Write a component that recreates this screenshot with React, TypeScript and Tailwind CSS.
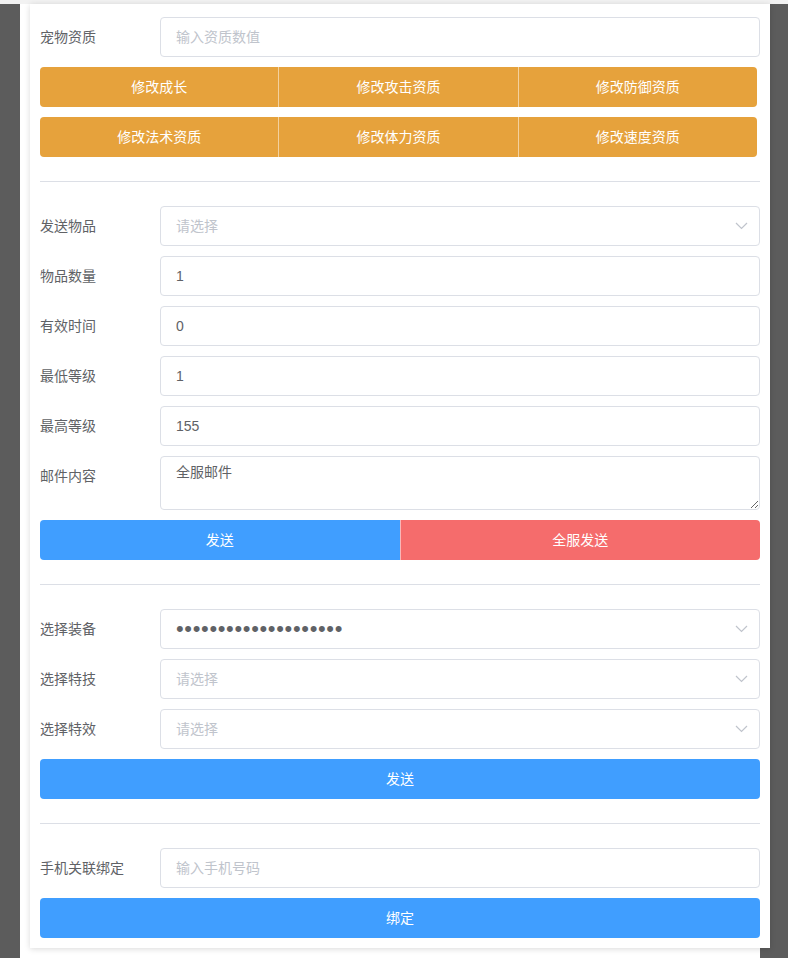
import React from 'react';

const font = "font-['Liberation_Sans','Noto_Sans_CJK_SC',sans-serif]";

type FieldProps = {
  label: string;
  children: React.ReactNode;
};

function Field({ label, children }: FieldProps) {
  return (
    <div className="flex items-start mb-[10px]">
      <label className="w-[120px] shrink-0 leading-[40px] text-[14px] text-[#606266]">{label}</label>
      <div className="flex-1 min-w-0">{children}</div>
    </div>
  );
}

function TextInput({ value, placeholder }: { value?: string; placeholder?: string }) {
  return (
    <input
      readOnly
      defaultValue={value}
      placeholder={placeholder}
      className={`${font} block w-full h-[40px] px-[15px] border border-[#dcdfe6] rounded-[4px] bg-white text-[14px] text-[#606266] placeholder:text-[#c0c4cc] outline-none`}
    />
  );
}

function Chevron() {
  return (
    <svg className="absolute right-[12px] top-1/2 -translate-y-1/2" width="13" height="8" viewBox="0 0 13 8" fill="none">
      <polyline points="1,1 6.5,6.5 12,1" stroke="#c0c4cc" strokeWidth="1.2" />
    </svg>
  );
}

function Select({ placeholder, password }: { placeholder?: string; password?: boolean }) {
  return (
    <div className="relative">
      {password ? (
        <input
          readOnly
          type="password"
          defaultValue="xxxxxxxxxxxxxxxxxxxx"
          className={`${font} block w-full h-[40px] pl-[15px] pr-[30px] border border-[#dcdfe6] rounded-[4px] bg-white text-[22px] tracking-[0.65px] text-[#606266] outline-none`}
        />
      ) : (
        <TextInput placeholder={placeholder} />
      )}
      <Chevron />
    </div>
  );
}

function Divider() {
  return <div className="my-[24px] h-px bg-[#dcdfe6]" />;
}

const orangeRows = [
  ['修改成长', '修改攻击资质', '修改防御资质'],
  ['修改法术资质', '修改体力资质', '修改速度资质'],
];

export default function App() {
  return (
    <div className={`${font} w-[788px] h-[958px] bg-white flex flex-col overflow-hidden`}>
      <div className="h-[4px] shrink-0 bg-[#f2f2f2]" />
      <div className="flex flex-1">
        <div className="w-[20px] bg-[#5c5c5c]" />
        <div className="w-[10px]" />
        <div className="w-[740px] flex flex-col">
          <div className="relative z-10 h-[944px] bg-white px-[10px] pt-[13px] shadow-[0_1px_6px_rgba(0,0,0,0.15)]">
            <Field label="宠物资质">
              <TextInput placeholder="输入资质数值" />
            </Field>
            {orangeRows.map((row, i) => (
              <div key={i} className="flex w-[717px] h-[40px] mb-[10px]">
                {row.map((t, j) => (
                  <button
                    key={t}
                    className={`flex-1 bg-[#e6a23c] text-white text-[14px] ${j === 0 ? 'rounded-l-[4px]' : 'border-l border-white/50'} ${j === row.length - 1 ? 'rounded-r-[4px]' : ''}`}
                  >
                    {t}
                  </button>
                ))}
              </div>
            ))}

            <Divider />

            <Field label="发送物品">
              <Select placeholder="请选择" />
            </Field>
            <Field label="物品数量">
              <TextInput value="1" />
            </Field>
            <Field label="有效时间">
              <TextInput value="0" />
            </Field>
            <Field label="最低等级">
              <TextInput value="1" />
            </Field>
            <Field label="最高等级">
              <TextInput value="155" />
            </Field>
            <Field label="邮件内容">
              <textarea
                readOnly
                defaultValue="全服邮件"
                rows={2}
                className={`${font} block w-full h-[54px] px-[15px] py-[5px] leading-[1.5] border border-[#dcdfe6] rounded-[4px] text-[14px] text-[#606266] outline-none`}
              />
            </Field>
            <div className="flex h-[40px] mb-[10px]">
              <button className="flex-1 rounded-l-[4px] bg-[#409eff] text-white text-[14px]">发送</button>
              <button className="flex-1 rounded-r-[4px] border-l border-white/50 bg-[#f56c6c] text-white text-[14px]">全服发送</button>
            </div>

            <Divider />

            <Field label="选择装备">
              <Select password />
            </Field>
            <Field label="选择特技">
              <Select placeholder="请选择" />
            </Field>
            <Field label="选择特效">
              <Select placeholder="请选择" />
            </Field>
            <button className="block w-full h-[40px] mb-[10px] rounded-[4px] bg-[#409eff] text-white text-[14px]">发送</button>

            <Divider />

            <Field label="手机关联绑定">
              <TextInput placeholder="输入手机号码" />
            </Field>
            <button className="block w-full h-[40px] mb-[10px] rounded-[4px] bg-[#409eff] text-white text-[14px]">绑定</button>
          </div>
          <div className="flex flex-1">
            <div className="w-[730px]" />
            <div className="flex-1 bg-[#5c5c5c]" />
          </div>
        </div>
        <div className="flex-1 bg-[#5c5c5c]" />
      </div>
    </div>
  );
}
